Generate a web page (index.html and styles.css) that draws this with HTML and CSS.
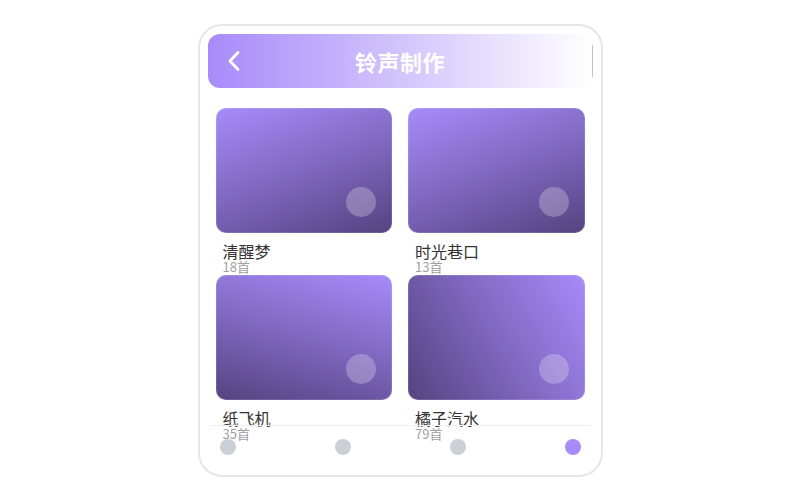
FILE: index.html
```html
<!DOCTYPE html>
<html lang="zh">
<head>
<meta charset="utf-8">
<title>铃声制作</title>
<link rel="stylesheet" href="styles.css">
</head>
<body>
<div class="phone">
  <header class="topbar">
    <svg class="back" width="14" height="22" viewBox="0 0 14 22"><polyline points="11,2.5 3,11 11,19.5" fill="none" stroke="#fff" stroke-width="2.8" stroke-linecap="round" stroke-linejoin="round"/></svg>
    <h1 class="title">铃声制作</h1>
  </header>
  <main class="grid">
    <div class="tile">
      <div class="card g1"><span class="play"></span></div>
      <div class="caption"><div class="name">清醒梦</div><div class="count">18首</div></div>
    </div>
    <div class="tile">
      <div class="card g1"><span class="play"></span></div>
      <div class="caption"><div class="name">时光巷口</div><div class="count">13首</div></div>
    </div>
    <div class="tile">
      <div class="card g3"><span class="play"></span></div>
      <div class="caption"><div class="name">纸飞机</div><div class="count">35首</div></div>
    </div>
    <div class="tile">
      <div class="card g4"><span class="play"></span></div>
      <div class="caption"><div class="name">橘子汽水</div><div class="count">79首</div></div>
    </div>
  </main>
  <nav class="tabs">
    <span class="dot"></span>
    <span class="dot"></span>
    <span class="dot"></span>
    <span class="dot active"></span>
  </nav>
</div>
</body>
</html>
```

FILE: styles.css
```css
html, body {
  margin: 0;
  padding: 0;
  background: #ffffff;
}
body {
  height: 500px;
  display: flex;
  align-items: center;
  justify-content: center;
  font-family: "Noto Sans CJK SC", "Noto Sans", sans-serif;
}
.phone {
  width: 401px;
  height: 449px;
  border: 2px solid #e6e6ea;
  border-radius: 24px;
  background: #fff;
  display: flex;
  flex-direction: column;
  box-sizing: content-box;
}
.topbar {
  margin: 8px 8px 0;
  height: 54px;
  border-radius: 12px;
  background:
    linear-gradient(#c4b5fd, #c4b5fd) no-repeat right 0 center / 1px 32px,
    linear-gradient(90deg, #a78bfa 0%, #d2c4fc 50%, #ffffff 100%);
  display: flex;
  align-items: center;
  justify-content: center;
  position: relative;
  flex: none;
}
.back {
  position: absolute;
  left: 19px;
  top: 16px;
}
.title {
  margin: 0;
  font-size: 22px;
  font-weight: 700;
  color: #ffffff;
  letter-spacing: 0.5px;
}
.grid {
  flex: none;
  height: 317px;
  padding: 20px 16px 0;
  display: grid;
  grid-template-columns: 1fr 1fr;
  grid-auto-rows: 151px;
  column-gap: 16px;
  row-gap: 16px;
}
.tile {
  min-width: 0;
}
.card {
  position: relative;
  z-index: 1;
  height: 125px;
  border-radius: 10px;
  box-shadow: inset 0 0 0 1px rgba(255,255,255,0.12);
}
.g1 { background: linear-gradient(160deg, #a78bfa 0%, #7f68c0 50%, #554380 100%); }
.g3 { background: linear-gradient(195deg, #a78bfa 0%, #7f68c0 50%, #554380 100%); }
.g4 { background: linear-gradient(240deg, #a78bfa 0%, #7f68c0 50%, #554380 100%); }
.play {
  position: absolute;
  right: 16px;
  bottom: 16px;
  width: 30px;
  height: 30px;
  border-radius: 50%;
  background: rgba(255,255,255,0.25);
}
.caption {
  padding: 10px 7px 0;
}
.name {
  font-size: 16px;
  line-height: 17px;
  color: #333333;
  font-weight: 400;
}
.count {
  font-size: 13px;
  line-height: 13px;
  color: #a0a0a6;
}
.tabs {
  position: relative;
  z-index: 2;
  margin: 0 10px;
  border-top: 1px solid #eceef1;
  padding: 13px 10px 0;
  display: flex;
  justify-content: space-between;
}
.dot {
  width: 16px;
  height: 16px;
  border-radius: 50%;
  background: #cbd0d6;
}
.dot.active {
  background: #a78bfa;
}
```
